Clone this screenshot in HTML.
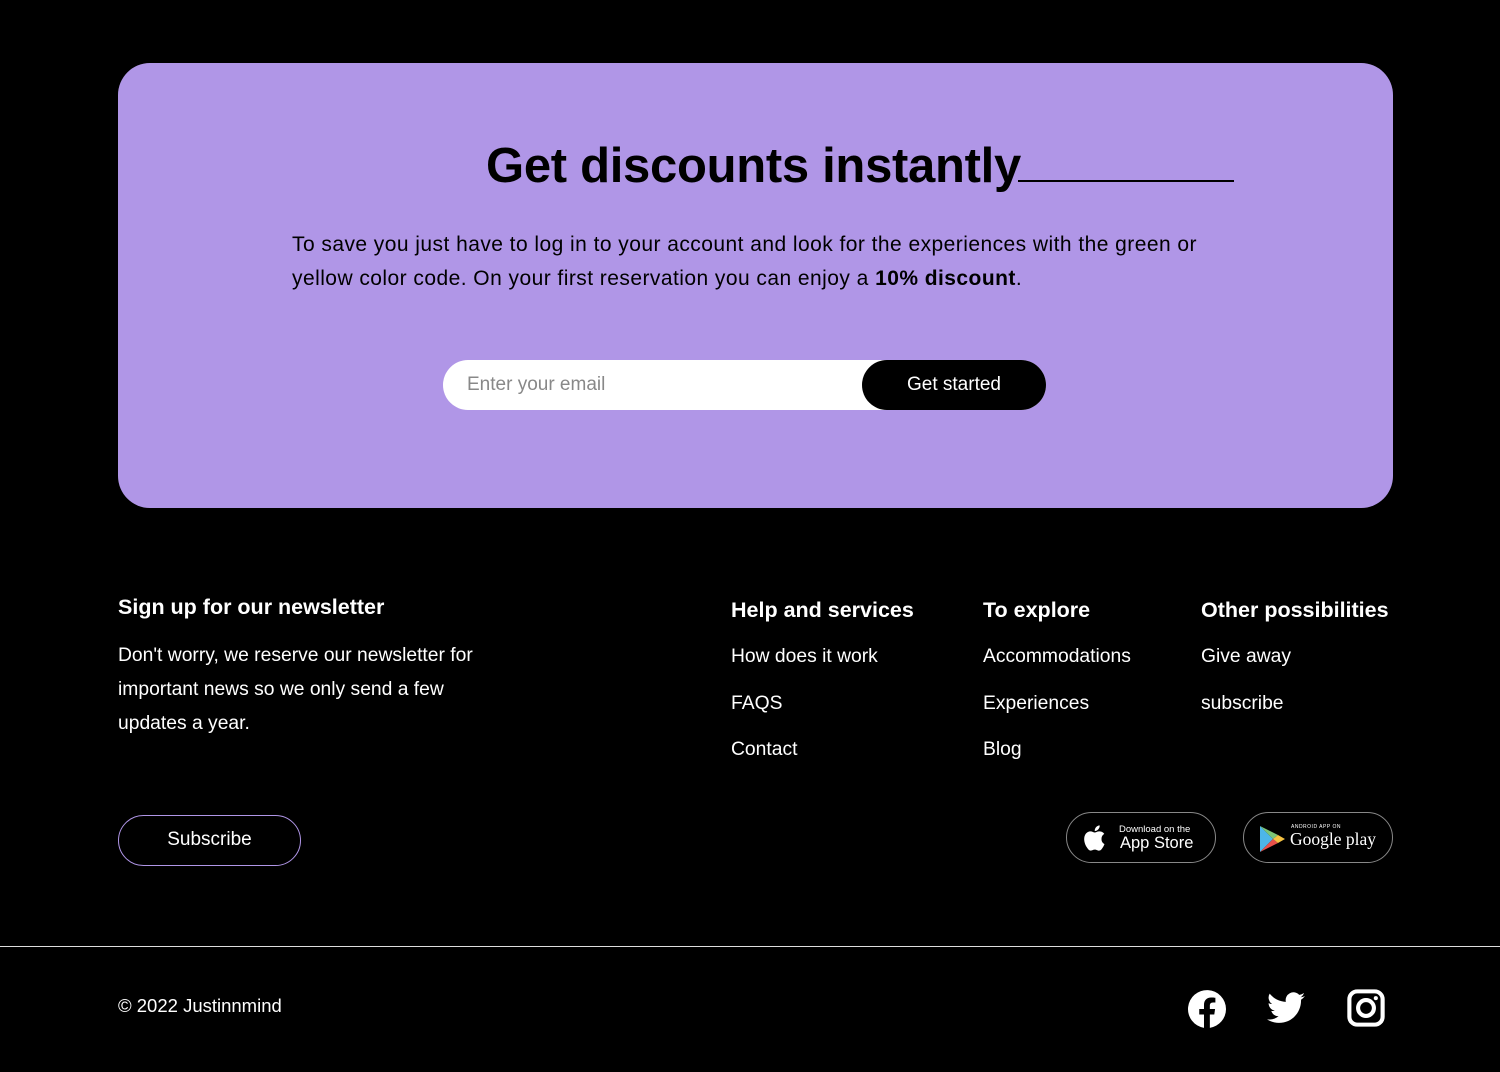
<!DOCTYPE html>
<html><head><style>
*{margin:0;padding:0;box-sizing:border-box}
body{width:1500px;height:1072px;background:#000;font-family:"Liberation Sans",sans-serif;color:#fff;position:relative;overflow:hidden}
.card{position:absolute;left:118px;top:63px;width:1275px;height:445px;background:#b096e7;border-radius:32px;color:#000}
h1{position:absolute;left:368px;top:75px;font-size:49px;font-weight:bold;letter-spacing:-0.3px;white-space:nowrap}
.line{position:absolute;left:900px;top:117px;width:216px;height:2px;background:#000}
.card p{position:absolute;left:174px;top:165px;width:960px;font-size:21px;line-height:34px;white-space:nowrap;letter-spacing:0.45px}
.inp{position:absolute;left:325px;top:297px;width:603px;height:50px;background:#fff;border-radius:25px}
.inp span{position:absolute;left:24px;top:14px;font-size:19px;color:#888}
.btn{position:absolute;right:0;top:0;width:184px;height:50px;background:#000;border-radius:25px;color:#fff;font-size:19px;text-align:center;line-height:50px}
.h{position:absolute;font-size:21.5px;font-weight:bold}
.t{position:absolute;font-size:19.3px;line-height:34px}
.sub{position:absolute;left:118px;top:815px;width:183px;height:51px;border:1.5px solid #b096e7;border-radius:26px;text-align:center;line-height:48px;font-size:19px}
.badge{position:absolute;top:812px;width:150px;height:51px;border:1.5px solid #888;border-radius:26px;background:#000}
.hr{position:absolute;left:0;top:946px;width:1500px;height:1px;background:#ddd}
</style></head><body>
<div class="card">
<h1>Get discounts instantly</h1><div class="line"></div>
<p>To save you just have to log in to your account and look for the experiences with the green or<br>yellow color code. On your first reservation you can enjoy a <b>10% discount</b>.</p>
<div class="inp"><span>Enter your email</span><div class="btn">Get started</div></div>
</div>
<div class="h" style="left:118px;top:595px">Sign up for our newsletter</div>
<div class="t" style="left:118px;top:639px;width:380px">Don't worry, we reserve our newsletter for important news so we only send a few updates a year.</div>
<div class="h" style="left:731px;top:598px">Help and services</div>
<div class="h" style="left:983px;top:598px">To explore</div>
<div class="h" style="left:1201px;top:598px">Other possibilities</div>
<div class="t" style="left:731px;top:640px">How does it work</div>
<div class="t" style="left:731px;top:687px">FAQS</div>
<div class="t" style="left:731px;top:733px">Contact</div>
<div class="t" style="left:983px;top:640px">Accommodations</div>
<div class="t" style="left:983px;top:687px">Experiences</div>
<div class="t" style="left:983px;top:733px">Blog</div>
<div class="t" style="left:1201px;top:640px">Give away</div>
<div class="t" style="left:1201px;top:687px">subscribe</div>
<div class="sub">Subscribe</div>
<div class="badge" style="left:1066px">
<svg style="position:absolute;left:14px;top:9px" width="30" height="32" viewBox="0 0 24 24"><path fill="#fff" d="M16.4 12.6c0-2.6 2.1-3.8 2.2-3.9-1.2-1.8-3.1-2-3.7-2-1.6-.2-3.1.9-3.9.9-.8 0-2-.9-3.4-.9-1.7 0-3.3 1-4.200 2.600-1.800 3.100-.5 7.700 1.300 10.200.8 1.200 1.800 2.600 3.100 2.600 1.300-.1 1.700-.8 3.300-.8 1.500 0 1.900.8 3.300.8 1.400 0 2.200-1.200 3-2.500 1-1.400 1.300-2.700 1.400-2.800-.1 0-2.600-1-2.400-4.200zM13.900 5c.7-.8 1.200-2 1-3.100-1 0-2.200.7-2.900 1.500-.6.7-1.200 1.900-1 3 1.100.1 2.200-.6 2.900-1.400z"/></svg>
<div style="position:absolute;left:52px;top:11px;font-size:9.5px">Download on the</div>
<div style="position:absolute;left:53px;top:21px;font-size:16.5px">App Store</div>
</div>
<div class="badge" style="left:1243px">
<svg style="position:absolute;left:14px;top:12px" width="28" height="28" viewBox="0 0 28 28"><path fill="#4db6e8" d="M2 1 L15 14 L2 27z"/><path fill="#7cc576" d="M2 1 L20 10 L15 14z"/><path fill="#e8514a" d="M2 27 L15 14 L20 18z"/><path fill="#f5c242" d="M20 10 L27 14 L20 18 L15 14z"/></svg>
<div style="position:absolute;left:47px;top:11px;font-size:5px;letter-spacing:.5px">ANDROID APP ON</div>
<div style="position:absolute;left:46px;top:16px;font-size:17.5px;font-family:'Liberation Serif',serif">Google play</div>
</div>
<div class="hr"></div>
<div class="t" style="left:118px;top:989px;font-size:18.5px">© 2022 Justinnmind</div>
<svg style="position:absolute;left:1188px;top:990px" width="38" height="38" viewBox="0 0 24 24"><path fill="#fff" d="M24 12a12 12 0 1 0-13.9 11.9v-8.4H7.1V12h3V9.4c0-3 1.8-4.7 4.5-4.7 1.3 0 2.700.2 2.700.2v3h-1.5c-1.5 0-2 .9-2 1.900V12h3.300l-.5 3.500h-2.800v8.400A12 12 0 0 0 24 12z"/></svg>
<svg style="position:absolute;left:1267px;top:991px" width="38" height="34" viewBox="0 0 24 20"><path fill="#fff" d="M24 2.4c-.9.4-1.8.7-2.8.8 1-.6 1.800-1.600 2.200-2.700-1 .6-2 1-3.100 1.200A4.900 4.900 0 0 0 11.900 6.100 14 14 0 0 1 1.700.9a4.900 4.900 0 0 0 1.500 6.600c-.8 0-1.600-.2-2.200-.6 0 2.400 1.700 4.400 3.900 4.800-.7.200-1.500.2-2.200.1.6 2 2.400 3.400 4.600 3.400A9.900 9.900 0 0 1 0 17.200 14 14 0 0 0 7.500 19.400c9.100 0 14-7.500 14-14v-.6c1-.7 1.800-1.600 2.500-2.400z"/></svg>
<svg style="position:absolute;left:1347px;top:989px" width="38" height="38" viewBox="0 0 24 24"><rect x="1.5" y="1.5" width="21" height="21" rx="5" fill="none" stroke="#fff" stroke-width="2.6"/><circle cx="12" cy="12" r="5" fill="none" stroke="#fff" stroke-width="2.6"/><circle cx="18.2" cy="5.8" r="1.3" fill="#fff"/></svg>
</body></html>
